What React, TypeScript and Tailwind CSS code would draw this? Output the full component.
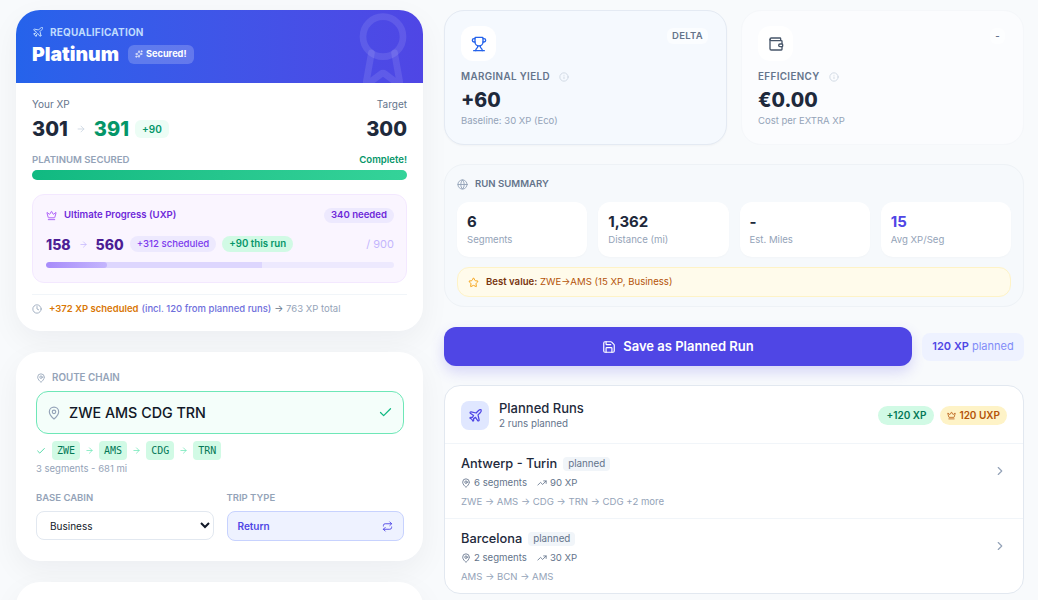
import { Plane, Sparkles, ArrowRight, Crown, Clock, MapPin, Check, Repeat, Trophy, Wallet, Info, Globe, Star, Save, TrendingUp, ChevronRight, Award } from 'lucide-react';

function Chip({ code, last }: { code: string; last?: boolean }) {
    return (
        <>
            <span className="h-[19px] px-[5px] flex items-center rounded bg-[#d1fae5] text-[#047857] text-[10px] font-['DejaVu_Sans_Mono',monospace]">{code}</span>
            {!last && <ArrowRight className="w-[9px] h-[9px] text-[#6ee7b7] mx-[5px]" />}
        </>
    );
}

function Stat({ value, label, accent }: { value: string; label: string; accent?: boolean }) {
    return (
        <div className="bg-white rounded-xl px-[10px] pt-[10px] h-[55px] shadow-[0_1px_2px_rgba(15,23,42,0.02)]">
            <div className={`text-[15px] leading-[20px] font-bold ${accent ? 'text-[#4f46e5]' : 'text-[#1e293b]'}`}>{value}</div>
            <div className="text-[9.6px] leading-[14px] mt-[1px] text-[#94a3b8]">{label}</div>
        </div>
    );
}

function MetricCard({ tinted, icon, tag, title, value, note }: { tinted?: boolean; icon: React.ReactNode; tag: string; title: string; value: string; note: string }) {
    return (
        <div className={`h-[135px] rounded-[20px] px-4 pt-[15px] ${tinted ? 'bg-[#f5f9fe] border border-[#e4eaf3] shadow-[0_1px_2px_rgba(15,23,42,0.03)]' : 'bg-[#fbfcfe] border border-[#f5f7fa]'}`}>
            <div className="flex items-start justify-between">
                <div className="w-[35px] h-[35px] bg-white rounded-xl flex items-center justify-center">{icon}</div>
                <span className="text-[9.5px] leading-[14px] mt-[2px] mr-[2px] font-semibold tracking-[0.03em] text-[#64748b] bg-white/60 rounded-md px-[5px] py-[1px]">{tag}</span>
            </div>
            <div className="flex items-center gap-[9px] mt-[9px]">
                <span className="text-[9.8px] leading-[14px] font-semibold tracking-[0.04em] text-[#64748b]">{title}</span>
                <Info className="w-[10px] h-[10px] text-[#cbd5e1]" />
            </div>
            <div className="text-[19.5px] leading-[26px] font-extrabold text-[#1e293b] mt-[3px]">{value}</div>
            <div className="text-[9.5px] leading-[14px] text-[#94a3b8] mt-[1px]">{note}</div>
        </div>
    );
}

function RunRow({ name, segments, xp, route }: { name: string; segments: number; xp: number; route: string }) {
    return (
        <div className="h-[75px] border-t border-[#f1f5f9] pl-[16px] pr-[16px] pt-[11px] flex items-start justify-between">
            <div>
                <div className="flex items-center gap-[6px] h-[18px]">
                    <span className="text-[12.8px] font-medium text-[#1e293b]">{name}</span>
                    <span className="text-[9.8px] leading-[14px] px-[5px] rounded bg-[#f1f5f9] text-[#64748b]">planned</span>
                </div>
                <div className="flex items-center gap-[10px] text-[9.6px] leading-[14px] text-[#64748b] mt-[3px]">
                    <span className="flex items-center gap-[3px]"><MapPin className="w-[10px] h-[10px]" />{segments} segments</span>
                    <span className="flex items-center gap-[3px]"><TrendingUp className="w-[10px] h-[10px]" />{xp} XP</span>
                </div>
                <div className="text-[9.6px] leading-[14px] text-[#94a3b8] mt-[5px]">{route}</div>
            </div>
            <ChevronRight className="w-[14px] h-[14px] mt-[9px] text-[#94a3b8]" />
        </div>
    );
}

export default function App() {
    return (
        <div className="h-screen overflow-hidden bg-[#f8fafc] font-['Inter',sans-serif] pt-[10px] pl-[16px] pr-[14px] grid grid-cols-[407px_580px] gap-x-[21px] items-start">
            <div className="flex flex-col gap-[21px]">
                <div className="bg-white rounded-[24px] overflow-hidden shadow-[0_10px_30px_rgba(15,23,42,0.05)]">
                    <div className="relative h-[73px] px-4 pt-[15px] bg-gradient-to-r from-[#2563eb] to-[#4f46e5] overflow-hidden">
                        <Award className="absolute right-0 top-0 w-[80px] h-[80px] text-white/10" />
                        <div className="flex items-center gap-[6px] h-[12px] mt-[1px] text-[10px] leading-[12px] font-bold tracking-[0.02em] text-[#bfdbfe]">
                            <Plane className="w-[12px] h-[12px]" />REQUALIFICATION
                        </div>
                        <div className="flex items-center gap-[9px] mt-[2px]">
                            <span className="text-[19.4px] leading-[28px] font-black text-white">Platinum</span>
                            <span className="h-[19px] flex items-center gap-[3px] px-[7px] rounded-md bg-white/20 text-[9.2px] font-bold text-white">
                                <Sparkles className="w-[8px] h-[8px]" />Secured!
                            </span>
                        </div>
                    </div>
                    <div className="px-4 pt-[15px] pb-[15px]">
                        <div className="flex justify-between items-end">
                            <div>
                                <div className="text-[10px] leading-[12px] text-[#64748b]">Your XP</div>
                                <div className="flex items-center mt-[5px] h-[28px]">
                                    <span className="text-[20px] font-extrabold text-[#1e293b]">301</span>
                                    <ArrowRight className="w-[10px] h-[10px] text-[#cbd5e1] mx-[8px]" />
                                    <span className="text-[20px] font-extrabold text-[#059669]">391</span>
                                    <span className="ml-[6px] px-[7px] h-[18px] flex items-center rounded-md bg-[#ecfdf5] text-[#059669] text-[10px] font-semibold">+90</span>
                                </div>
                            </div>
                            <div className="text-right">
                                <div className="text-[10px] leading-[12px] text-[#64748b]">Target</div>
                                <div className="text-[20px] leading-[28px] mt-[5px] font-extrabold text-[#1e293b]">300</div>
                            </div>
                        </div>
                        <div className="flex justify-between mt-[11px] text-[9.6px] leading-[12px] font-semibold">
                            <span className="text-[#94a3b8]">PLATINUM SECURED</span>
                            <span className="text-[#059669]">Complete!</span>
                        </div>
                        <div className="h-[10px] mt-[4px] rounded-full bg-gradient-to-r from-[#10b981] to-[#34d399]" />
                        <div className="mt-[14px] h-[89px] rounded-xl border border-[#f3e8ff] bg-[#faf5ff] pl-[13px] pr-[12px] pt-[13px]">
                            <div className="flex items-center justify-between">
                                <div className="flex items-center gap-[7px] text-[9.6px] font-semibold text-[#6d28d9]">
                                    <Crown className="w-[11px] h-[11px] text-[#a855f7]" />Ultimate Progress (UXP)
                                </div>
                                <span className="h-[15px] flex items-center px-[7px] rounded-full bg-[#ede9fe] text-[9.6px] font-semibold text-[#6d28d9]">340 needed</span>
                            </div>
                            <div className="flex items-center mt-[12px] h-[18px]">
                                <span className="text-[14px] font-extrabold text-[#4c1d95]">158</span>
                                <ArrowRight className="w-[9px] h-[9px] text-[#c4b5fd] mx-[8px]" />
                                <span className="text-[14px] font-extrabold text-[#4c1d95]">560</span>
                                <span className="ml-[6px] h-[16px] flex items-center px-[7px] rounded-full bg-[#ede9fe] text-[9.6px] font-medium text-[#7c3aed]">+312 scheduled</span>
                                <span className="ml-[6px] h-[16px] flex items-center px-[7px] rounded-full bg-[#d1fae5] text-[9.7px] font-semibold text-[#059669]">+90 this run</span>
                                <span className="ml-auto text-[11px] text-[#c4b5fd]">/ 900</span>
                            </div>
                            <div className="relative h-[6px] mt-[9px] rounded-full bg-[#ede9fe] overflow-hidden">
                                <div className="absolute left-0 top-0 h-full w-[62%] bg-[#ddd6fe]" />
                                <div className="absolute left-0 top-0 h-full w-[17.5%] rounded-full bg-gradient-to-r from-[#a78bfa] to-[#c4b5fd]" />
                            </div>
                        </div>
                        <div className="mt-[11px] pt-[7px] border-t border-[#f1f5f9] flex items-center text-[9.5px] leading-[14px]">
                            <Clock className="w-[10px] h-[10px] text-[#94a3b8] mr-[7px]" />
                            <span className="font-semibold text-[#d97706]">+372 XP scheduled</span>
                            <span className="ml-[3px] font-medium text-[#6f6fdc]">(incl. 120 from planned runs)</span>
                            <span className="ml-[3px] text-[#94a3b8]"><span className="text-[#64748b]">→</span> 763 XP total</span>
                        </div>
                    </div>
                </div>

                <div className="bg-white rounded-[24px] h-[209px] pl-5 pr-[19px] pt-[20px] shadow-[0_10px_30px_rgba(15,23,42,0.05)]">
                    <div className="flex items-center gap-[6px] text-[9.8px] leading-[12px] font-semibold text-[#94a3b8]">
                        <MapPin className="w-[10px] h-[10px]" />ROUTE CHAIN
                    </div>
                    <div className="mt-[7px] h-[43px] rounded-xl border border-[#6ee7b7] bg-[#f4fefa] pl-[10px] pr-[10px] flex items-center">
                        <MapPin className="w-[14px] h-[14px] text-[#94a3b8]" />
                        <span className="ml-[8px] text-[14.3px] font-medium text-[#111827]">ZWE AMS CDG TRN</span>
                        <Check className="ml-auto w-[15px] h-[15px] text-[#10b981]" />
                    </div>
                    <div className="flex items-center mt-[7px]">
                        <Check className="w-[10px] h-[10px] text-[#34d399] mr-[6px]" />
                        <Chip code="ZWE" />
                        <Chip code="AMS" />
                        <Chip code="CDG" />
                        <Chip code="TRN" last />
                    </div>
                    <div className="text-[9.5px] leading-[14px] mt-[2px] text-[#94a3b8]">3 segments - 681 mi</div>
                    <div className="grid grid-cols-2 gap-x-[13px] mt-[15px]">
                        <div>
                            <div className="text-[9.5px] leading-[13px] font-semibold text-[#94a3b8]">BASE CABIN</div>
                            <select defaultValue="Business" className="mt-[7px] w-full h-[29px] rounded-lg border border-[#e2e8f0] bg-white pl-[9px] text-[10px] text-[#111827]">
                                <option>Business</option>
                            </select>
                        </div>
                        <div>
                            <div className="text-[9.5px] leading-[13px] font-semibold text-[#94a3b8]">TRIP TYPE</div>
                            <div className="mt-[7px] h-[30px] rounded-lg border border-[#c7d2fe] bg-[#eef2ff] pl-[10px] pr-[10px] flex items-center justify-between text-[10px] font-semibold text-[#4f46e5]">
                                Return<Repeat className="w-[11px] h-[11px]" />
                            </div>
                        </div>
                    </div>
                </div>

                <div className="bg-white rounded-[24px] h-[120px] shadow-[0_10px_30px_rgba(15,23,42,0.05)]" />
            </div>

            <div className="flex flex-col">
                <div className="grid grid-cols-2 gap-[14px]">
                    <MetricCard tinted icon={<Trophy className="w-[16px] h-[16px] text-[#2563eb]" />} tag="DELTA" title="MARGINAL YIELD" value="+60" note="Baseline: 30 XP (Eco)" />
                    <MetricCard icon={<Wallet className="w-[16px] h-[16px] text-[#475569]" />} tag="-" title="EFFICIENCY" value="€0.00" note="Cost per EXTRA XP" />
                </div>

                <div className="mt-[19px] h-[143px] rounded-[20px] bg-[#f6f9fc] border border-[#eef2f6] px-[12px] pt-[13px]">
                    <div className="flex items-center gap-[7px] text-[9.6px] leading-[12px] font-semibold text-[#64748b]">
                        <Globe className="w-[11px] h-[11px] text-[#94a3b8]" />RUN SUMMARY
                    </div>
                    <div className="grid grid-cols-4 gap-[11px] mt-[12px]">
                        <Stat value="6" label="Segments" />
                        <Stat value="1,362" label="Distance (mi)" />
                        <Stat value="-" label="Est. Miles" />
                        <Stat value="15" label="Avg XP/Seg" accent />
                    </div>
                    <div className="mt-[10px] h-[30px] rounded-xl border border-[#fef3c7] bg-[#fffbeb] px-[10px] flex items-center gap-[7px] text-[9.6px] text-[#b45309]">
                        <Star className="w-[11px] h-[11px] text-[#f59e0b]" />
                        <span><span className="font-semibold text-[#78350f]">Best value:</span> ZWE→AMS (15 XP, Business)</span>
                    </div>
                </div>

                <div className="mt-[20px] flex items-center gap-[10px]">
                    <button className="w-[468px] h-[39px] rounded-xl bg-[#4f46e5] text-white text-[13px] font-semibold flex items-center justify-center gap-[7px] shadow-[0_6px_14px_rgba(79,70,229,0.2)]">
                        <Save className="w-[14px] h-[14px]" />Save as Planned Run
                    </button>
                    <div className="flex-1 h-[28px] rounded-lg bg-[#eef2ff] flex items-center justify-center text-[11px] gap-[3px]">
                        <span className="font-semibold text-[#4f46e5]">120 XP</span>
                        <span className="text-[#818cf8]">planned</span>
                    </div>
                </div>

                <div className="mt-[19px] h-[209px] rounded-2xl bg-white border border-[#e2e8f0] overflow-hidden">
                    <div className="h-[57px] pl-[16px] pr-[16px] pt-[1px] flex items-center justify-between">
                        <div className="flex items-center gap-[10px]">
                            <div className="w-[28px] h-[29px] rounded-lg bg-[#e0e7ff] flex items-center justify-center">
                                <Plane className="w-[15px] h-[15px] text-[#4f46e5]" />
                            </div>
                            <div>
                                <div className="text-[13px] leading-[17px] font-medium text-[#1e293b]">Planned Runs</div>
                                <div className="text-[9.8px] leading-[14px] text-[#64748b]">2 runs planned</div>
                            </div>
                        </div>
                        <div className="flex items-center gap-[6px]">
                            <span className="h-[19px] flex items-center px-[8px] rounded-full bg-[#d1fae5] text-[10px] font-semibold text-[#047857]">+120 XP</span>
                            <span className="h-[19px] flex items-center gap-[3px] px-[7px] rounded-full bg-[#fef3c7] text-[10px] font-semibold text-[#b45309]"><Crown className="w-[9px] h-[9px]" />120 UXP</span>
                        </div>
                    </div>
                    <RunRow name="Antwerp - Turin" segments={6} xp={90} route="ZWE → AMS → CDG → TRN → CDG +2 more" />
                    <RunRow name="Barcelona" segments={2} xp={30} route="AMS → BCN → AMS" />
                </div>
            </div>
        </div>
    );
}
